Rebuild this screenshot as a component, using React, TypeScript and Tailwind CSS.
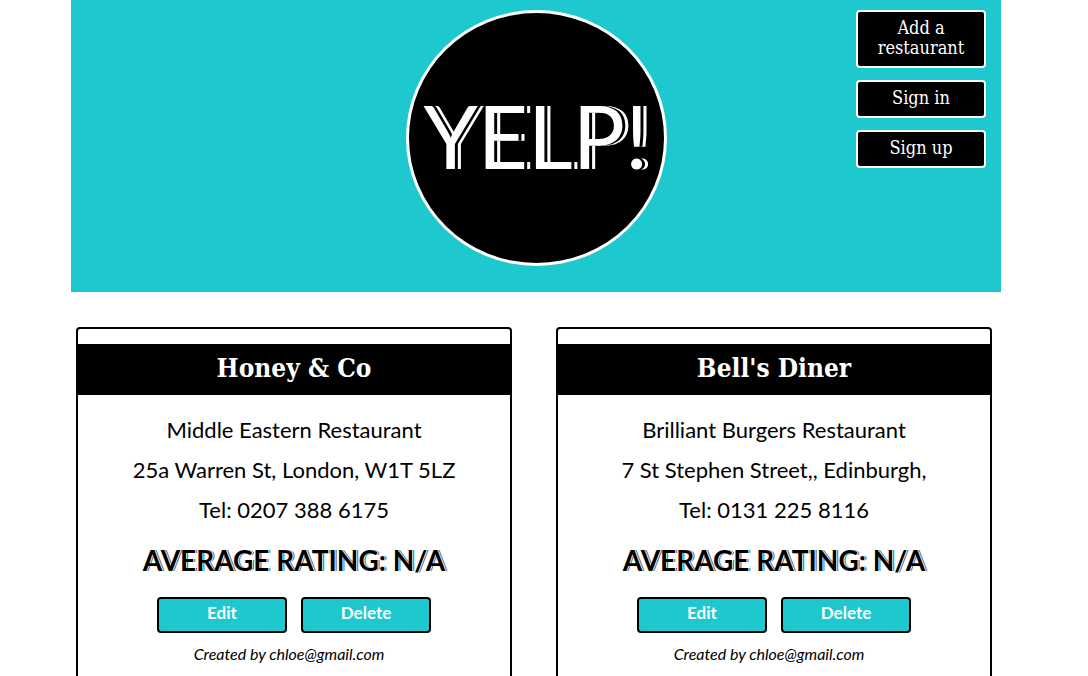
type Restaurant = {
  name: string;
  cuisine: string;
  address: string;
  phone: string;
  owner: string;
};

const restaurants: Restaurant[] = [
  {
    name: 'Honey & Co',
    cuisine: 'Middle Eastern Restaurant',
    address: '25a Warren St, London, W1T 5LZ',
    phone: '0207 388 6175',
    owner: 'chloe@gmail.com',
  },
  {
    name: "Bell's Diner",
    cuisine: 'Brilliant Burgers Restaurant',
    address: '7 St Stephen Street,, Edinburgh,',
    phone: '0131 225 8116',
    owner: 'chloe@gmail.com',
  },
];

function NavLink({ label }: { label: string }) {
  return (
    <a
      href="#"
      className="block rounded border-2 border-white bg-black px-3 pt-1.5 pb-2 text-center font-['DejaVu_Serif_Condensed','DejaVu_Serif',serif] text-[18px] leading-5 text-white"
    >
      {label}
    </a>
  );
}

function CardButton({ label }: { label: string }) {
  return (
    <button
      type="button"
      className="w-[130px] rounded border-2 border-black bg-[#1ec8cf] pt-1 pb-2 text-center text-[17px] leading-5 font-bold text-white"
    >
      {label}
    </button>
  );
}

function RestaurantCard({ restaurant }: { restaurant: Restaurant }) {
  return (
    <article className="rounded border-2 border-black pt-[15px] pb-8 text-center">
      <h2 className="bg-black pt-1 pb-[7px] font-['DejaVu_Serif_Condensed','DejaVu_Serif',serif] text-[26px] leading-10 font-bold text-white">
        {restaurant.name}
      </h2>
      <div className="pt-[15px] text-[22px] leading-10">
        <p>{restaurant.cuisine}</p>
        <p>{restaurant.address}</p>
        <p>Tel: {restaurant.phone}</p>
      </div>
      <h3 className="pt-2.5 text-[28px] leading-10 font-bold uppercase [text-shadow:1px_0_0_#fff,2px_0_0_#555]">
        Average rating: N/A
      </h3>
      <div className="flex justify-center gap-3.5 pt-[17px]">
        <CardButton label="Edit" />
        <CardButton label="Delete" />
      </div>
      <p className="pt-[11px] pr-2.5 text-[16px] leading-5 italic">Created by {restaurant.owner}</p>
    </article>
  );
}

export default function App() {
  return (
    <div className="bg-white pr-4 font-[Lato,sans-serif] text-black">
      <div className="mx-auto max-w-[930px]">
        <header className="grid grid-cols-[1fr_auto_1fr] bg-[#1ec8cf] pt-2.5 pb-[26px]">
          <h1 className="col-start-2 flex h-64 w-[261px] items-center justify-center rounded-[50%] border-3 border-white bg-black pb-1.5 text-[87px] leading-none font-normal text-white [text-shadow:3px_0_0_#000,6px_0_0_#fff]">
            YELP!
          </h1>
          <nav className="flex w-[145px] flex-col gap-3 justify-self-end pr-[15px]">
            <NavLink label="Add a restaurant" />
            <NavLink label="Sign in" />
            <NavLink label="Sign up" />
          </nav>
        </header>
        <main className="grid grid-cols-2 gap-11 pt-[35px] pr-[9px] pb-8 pl-[5px]">
          {restaurants.map((restaurant) => (
            <RestaurantCard key={restaurant.name} restaurant={restaurant} />
          ))}
        </main>
      </div>
    </div>
  );
}
